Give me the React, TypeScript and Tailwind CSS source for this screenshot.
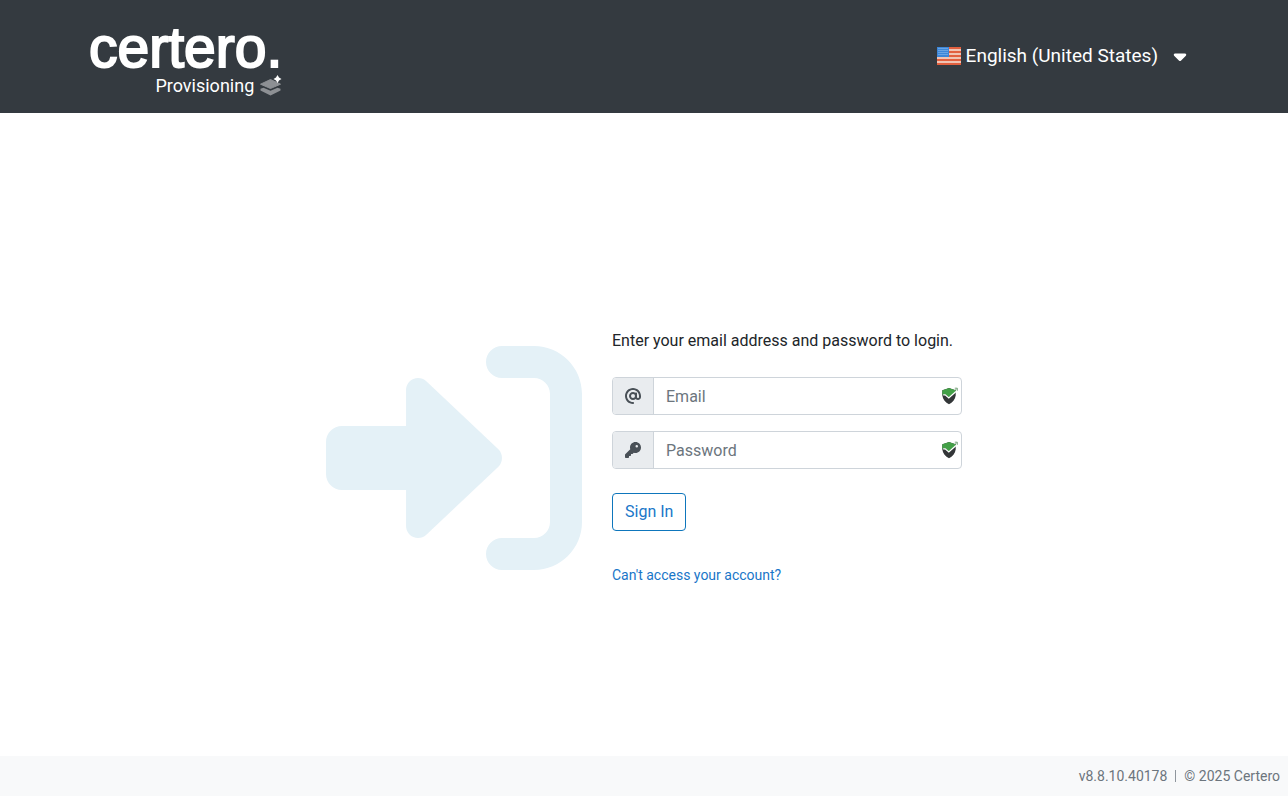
import React from 'react';
import { FaAt, FaCaretDown, FaKey } from 'react-icons/fa6';

const fields = [
  { id: 'email', type: 'email', label: 'Email', icon: FaAt },
  { id: 'password', type: 'password', label: 'Password', icon: FaKey },
];

const stripes = [0, 1, 2, 3, 4, 5, 6, 7, 8];
const starRows = [2, 4, 6, 8];
const starColumns = [2, 4, 6, 8, 10];

function FlagIcon() {
  return (
    <svg viewBox="0 0 24 18" className="h-[18px] w-6" aria-hidden="true">
      {stripes.map((n) => (
        <rect key={n} y={n * 2} width="24" height="2" fill={n % 2 ? '#f0c4b4' : '#e2603f'} />
      ))}
      <rect width="12" height="10" fill="#3c86d8" />
      {starRows.map((y) =>
        starColumns.map((x) => (
          <circle key={`${x}-${y}`} cx={x} cy={y - 0.5} r="0.5" fill="#b5d7f5" />
        ))
      )}
    </svg>
  );
}

function LayersIcon() {
  return (
    <svg viewBox="0 0 22 22" className="h-[22px] w-[22px]" aria-hidden="true">
      <path d="M10.5 4.5 20.5 9.2 10.5 13.5 0.5 9.2Z" fill="#8d9094" stroke="#8d9094" strokeLinejoin="round" />
      <path
        d="M0.5 13.8 3.5 12.8 10.5 15.8 17.5 12.8 20.5 13.8V15.5L10.5 20.5 0.5 15.5Z"
        fill="#8d9094"
      />
      <path
        d="M17.5 0 19 2.5 21.5 4 19 5.5 17.5 8 16 5.5 13.5 4 16 2.5Z"
        fill="#fff"
      />
    </svg>
  );
}

function ShieldIcon() {
  return (
    <svg viewBox="0 0 16 18" className="h-[18px] w-4" aria-hidden="true">
      <path
        d="M0.3 3.2 3.5 2.2 7 1 10.5 2.2 13.7 3.2V8.5C13.2 12.5 10.5 15.5 7 17.2 3.5 15.5 0.8 12.5 0.3 8.5Z"
        fill="#333638"
      />
      <path d="M0.3 3.2 3.5 2.2 7 1 10.5 2.2 13.7 3.2V4.8L7 10.8 3.5 7.6 0.3 8Z" fill="#43a047" />
      <path d="M1.2 7.8 3.2 7.8 6.8 11 14 4.6" fill="none" stroke="#fff" strokeWidth="1.3" />
      <path d="M12.8 3.6 14.8 1.6M12.8 1.2H15.3V3.8" fill="none" stroke="#6c9b72" strokeWidth="0.9" />
    </svg>
  );
}

function LoginIcon() {
  return (
    <svg viewBox="0 0 512 512" fill="currentColor" className="h-64 w-64 text-[#e4f1f7]" aria-hidden="true">
      <path d="M344.7 238.5l-144.1-136C193.7 95.97 183.4 94.17 174.6 97.95C165.8 101.8 160.1 110.4 160.1 120V192H32.02C14.33 192 0 206.3 0 224v64c0 17.68 14.33 32 32.02 32h128.1v72c0 9.578 5.707 18.25 14.51 22.05c8.803 3.781 19.03 1.984 26-4.594l144.1-136C354.3 264.6 354.3 247.4 344.7 238.5z" />
      <path d="M416 32h-64c-17.67 0-32 14.33-32 32s14.33 32 32 32h64c17.67 0 32 14.33 32 32v256c0 17.67-14.33 32-32 32h-64c-17.67 0-32 14.33-32 32s14.33 32 32 32h64c53.02 0 96-42.98 96-96V128C512 74.98 469 32 416 32z" />
    </svg>
  );
}

function Header() {
  return (
    <header className="bg-[#343a40] text-white">
      <div className="mx-auto flex h-[113px] max-w-[1140px] items-center justify-between px-[15px]">
        <div className="flex flex-col items-end pt-1">
          <span className="font-['Liberation_Sans',Arial,sans-serif] text-[57px] leading-[54px] [-webkit-text-stroke:2px_white]">
            certero.
          </span>
          <div className="flex items-center gap-1.5">
            <span className="text-lg leading-6">Provisioning</span>
            <LayersIcon />
          </div>
        </div>
        <button type="button" className="flex items-center gap-[5px] pr-[9px] pb-0.5 text-[19px] leading-7">
          <FlagIcon />
          <span>English (United States)</span>
          <FaCaretDown className="ml-[7px] h-5 w-5" />
        </button>
      </div>
    </header>
  );
}

function LoginForm() {
  return (
    <form className="w-[350px]">
      <p className="mb-6 text-base text-[#212529]">
        Enter your email address and password to login.
      </p>
      <div className="space-y-4">
        {fields.map((field) => (
          <div
            key={field.id}
            className="flex h-[38px] items-stretch overflow-hidden rounded border border-[#ced4da] bg-white"
          >
            <label
              htmlFor={field.id}
              aria-label={field.label}
              className="flex w-[41px] items-center justify-center border-r border-[#ced4da] bg-[#e9ecef] text-[#495057]"
            >
              <field.icon className="h-4 w-4" />
            </label>
            <input
              id={field.id}
              type={field.type}
              placeholder={field.label}
              className="min-w-0 flex-1 px-3 pt-0.5 text-base text-[#495057] outline-none placeholder:text-[#6c757d]"
            />
            <span className="flex w-[19px] items-center">
              <ShieldIcon />
            </span>
          </div>
        ))}
      </div>
      <button
        type="button"
        className="mt-6 h-[38px] rounded border border-[#0e76bc] px-3 text-base text-[#1976c8]"
      >
        Sign In
      </button>
      <div className="mt-8">
        <a href="#" className="text-sm text-[#1976c8]">
          Can't access your account?
        </a>
      </div>
    </form>
  );
}

export default function App() {
  return (
    <div className="flex min-h-screen flex-col bg-white font-[Roboto,sans-serif]">
      <Header />
      <main className="flex flex-1 items-center justify-center gap-[30px] pt-[46px]">
        <LoginIcon />
        <LoginForm />
      </main>
      <footer className="flex h-10 items-center justify-end gap-2 bg-[#f8f9fa] px-2 text-sm text-[#6c757d]">
        <span>v8.8.10.40178</span>
        <span className="h-3 w-px bg-[#8f969d]" />
        <span>© 2025 Certero</span>
      </footer>
    </div>
  );
}
